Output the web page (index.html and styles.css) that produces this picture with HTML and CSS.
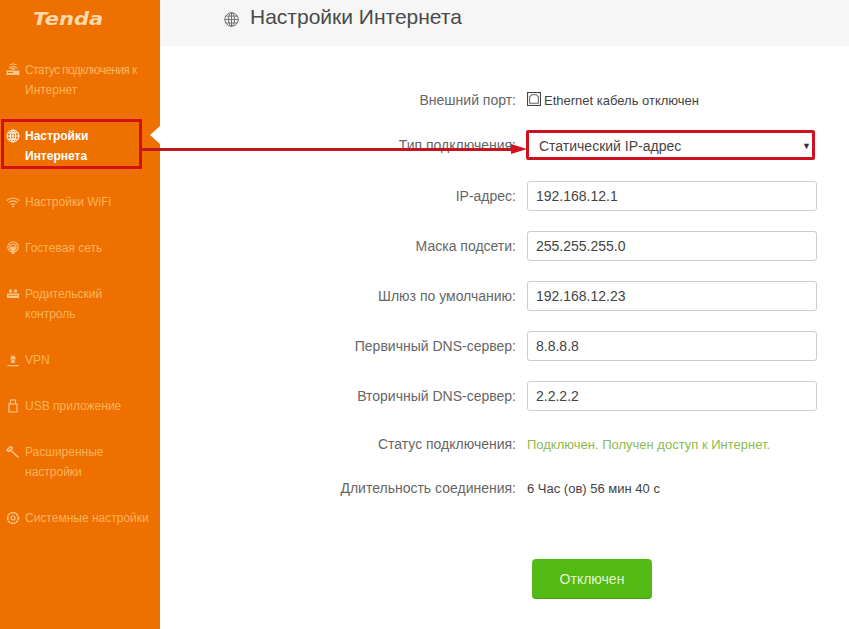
FILE: index.html
```html
<!DOCTYPE html>
<html lang="ru">
<head>
<meta charset="utf-8">
<title>Настройки Интернета</title>
<link rel="stylesheet" href="styles.css">
</head>
<body>
<div class="page">
  <aside class="sidebar">
    <div class="logo"><span class="logo-text">Tenda</span></div>
    <nav class="menu">
      <a class="item">
        <svg class="ico" viewBox="0 0 14 14"><path d="M3.200 5.200a5.200 5.200 0 0 1 7.600 0M5 6.400a2.800 2.800 0 0 1 4 0" fill="none" stroke="currentColor" stroke-width="1.300"/><path d="M3.500 1.800a7.500 7.500 0 0 1 7 0" fill="none" stroke="currentColor" stroke-width="1"/><path d="M.5 7.500h13v4.500H.5z" fill="currentColor"/><path d="M2 9.500h5" stroke="#ee7000" stroke-width="1"/></svg>
        <span><span class="squeeze">Статус подключения к</span><br>Интернет</span>
      </a>
      <a class="item active">
        <svg class="ico" viewBox="0 0 14 14"><g fill="none" stroke="currentColor" stroke-width="1"><circle cx="7" cy="7" r="6"/><ellipse cx="7" cy="7" rx="2.600" ry="6"/><path d="M7 1v12M1 7h12M2 4h10M2 10h10"/></g></svg>
        <span>Настройки<br>Интернета</span>
      </a>
      <a class="item">
        <svg class="ico" viewBox="0 0 14 14"><g fill="none" stroke="currentColor" stroke-width="1.100"><path d="M.8 5.500a8.800 8.800 0 0 1 12.400 0M2.800 7.700a5.800 5.800 0 0 1 8.400 0M4.900 9.800a3 3 0 0 1 4.200 0"/></g><circle cx="7" cy="11.600" r="1" fill="currentColor"/></svg>
        <span>Настройки WiFi</span>
      </a>
      <a class="item">
        <svg class="ico" viewBox="0 0 14 14"><g fill="none" stroke="currentColor" stroke-width="1.100"><circle cx="7" cy="6" r="5.200"/><circle cx="7" cy="6" r="3"/></g><path d="M5.200 5.500h3.600l-.6 7.500H5.800z" fill="currentColor"/></svg>
        <span>Гостевая сеть</span>
      </a>
      <a class="item">
        <svg class="ico" viewBox="0 0 14 14"><path d="M1 6.500h12v4.500H1z" fill="currentColor"/><circle cx="4.500" cy="4" r="1.700" fill="currentColor"/><circle cx="9.500" cy="4" r="1.700" fill="currentColor"/><path d="M2.500 8.500h9" stroke="#ee7000" stroke-width=".7"/></svg>
        <span>Родительский<br>контроль</span>
      </a>
      <a class="item">
        <svg class="ico" viewBox="0 0 14 14"><path d="M4.500 5a2.500 2.500 0 0 1 5 0v1.500h-5z" fill="currentColor"/><path d="M5.500 7h3l.5 3H5zM1.500 12h11v1.200h-11z" fill="currentColor"/></svg>
        <span>VPN</span>
      </a>
      <a class="item">
        <svg class="ico" viewBox="0 0 14 14"><g fill="none" stroke="currentColor" stroke-width="1.200"><path d="M4.500 1h5v4h-5zM3 5h8v8H3z"/></g></svg>
        <span>USB приложение</span>
      </a>
      <a class="item">
        <svg class="ico" viewBox="0 0 14 14"><g fill="none" stroke="currentColor" stroke-width="1.400"><path d="M5 5.500l7.500 7"/><path d="M1 5L4.500 1.500l2 1.500L3 6.500z"/></g></svg>
        <span>Расширенные<br>настройки</span>
      </a>
      <a class="item">
        <svg class="ico" viewBox="0 0 14 14"><g fill="none" stroke="currentColor"><circle cx="7" cy="7" r="5.400" stroke-width="1.600" stroke-dasharray="2.200 .6"/><circle cx="7" cy="7" r="2" stroke-width="1.200"/></g></svg>
        <span>Системные настройки</span>
      </a>
    </nav>
  </aside>
  <main class="content">
    <header class="topbar">
      <svg class="title-ico" viewBox="0 0 14 14"><g fill="none" stroke="#6b6b6b" stroke-width=".9"><circle cx="7" cy="7" r="6.300"/><ellipse cx="7" cy="7" rx="2.800" ry="6.300"/><path d="M7 .7v12.600M.7 7h12.600M1.600 3.800h10.800M1.600 10.200h10.800"/></g></svg>
      <h1 class="title">Настройки Интернета</h1>
    </header>
    <form class="form">
      <div class="row row-port">
        <label class="lbl">Внешний порт:</label>
        <div class="val val-dark"><svg class="port" viewBox="0 0 13 13"><rect x=".5" y=".5" width="12" height="12" fill="none" stroke="#444"/><path d="M2.500 10.500V4.500L4.500 2.500H8.500L10.500 4.500V10.500Z" fill="none" stroke="#666"/></svg>Ethernet кабель отключен</div>
      </div>
      <div class="row row-select">
        <label class="lbl">Тип подключения:</label>
        <div class="select"><span>Статический IP-адрес</span><span class="caret">▼</span></div>
      </div>
      <div class="row"><label class="lbl">IP-адрес:</label><div class="input">192.168.12.1</div></div>
      <div class="row"><label class="lbl">Маска подсети:</label><div class="input">255.255.255.0</div></div>
      <div class="row"><label class="lbl">Шлюз по умолчанию:</label><div class="input">192.168.12.23</div></div>
      <div class="row"><label class="lbl">Первичный DNS-сервер:</label><div class="input">8.8.8.8</div></div>
      <div class="row"><label class="lbl">Вторичный DNS-сервер:</label><div class="input">2.2.2.2</div></div>
      <div class="row row-status"><label class="lbl">Статус подключения:</label><div class="val val-green">Подключен. Получен доступ к Интернет.</div></div>
      <div class="row row-time"><label class="lbl">Длительность соединения:</label><div class="val val-dark">6 Час (ов) 56 мин 40 с</div></div>
      <div class="actions"><button type="button" class="btn">Отключен</button></div>
    </form>
  </main>
</div>
<div class="notch"></div>
<div class="mark mark-menu"></div>
<div class="arrow-line"></div>
<div class="arrow-head"></div>
</body>
</html>
```
FILE: styles.css
```css
* { box-sizing: border-box; }
html, body { margin: 0; height: 100%; overflow: hidden; background: #fff; }
body { position: relative; font-family: "Liberation Sans", Arial, sans-serif; }
.page { display: flex; width: 849px; height: 629px; }
.sidebar { width: 160px; flex: none; background: #ee7000; color: #fbb35a; }
.logo { height: 60px; padding: 6px 0 0 33px; }
.logo-text { display: inline-block; font: oblique bold 18px/26px "DejaVu Sans", sans-serif; color: #fcd9aa; transform: scaleX(1.17); transform-origin: left center; }
.menu { display: flex; flex-direction: column; gap: 26px; }
.item { display: flex; gap: 5px; padding-left: 6px; font-size: 12px; line-height: 20px; white-space: nowrap; }
.squeeze { letter-spacing: -.6px; }
.item.active { color: #fff; font-weight: bold; }
.ico { width: 14px; height: 14px; margin-top: 3px; flex: none; color: #fcc78a; }
.item.active .ico { color: #fff; }
.content { flex: 1; min-width: 0; }
.topbar { height: 46px; background: #f6f6f6; display: flex; align-items: flex-start; gap: 11px; padding: 5px 0 0 64px; }
.title-ico { width: 15px; height: 15px; margin-top: 7px; }
.title { margin: 0; font-size: 21px; line-height: 23px; font-weight: normal; color: #4a4a4a; }
.form { display: flex; flex-direction: column; gap: 20px; padding-top: 45px; }
.row { display: flex; align-items: center; height: 30px; }
.row-port { height: 18px; }
.row-select { height: 32px; }
.row-status { height: 26px; }
.row-time { height: 22px; }
.lbl { width: 356px; text-align: right; font-size: 14px; color: #666; flex: none; }
.val { margin-left: 11px; font-size: 13px; padding-top: 1px; }
.val-dark { color: #444; display: flex; align-items: center; gap: 3px; }
.val-green { color: #8dbb4e; }
.port { width: 14px; height: 14px; margin-bottom: 3px; }
.input { margin-left: 11px; width: 290px; height: 30px; border: 1px solid #ccc; border-radius: 3px; padding-left: 8px; font-size: 14px; line-height: 28px; color: #444; }
.select { margin-left: 10px; width: 289px; height: 30px; border: 3px solid #cf1020; border-radius: 2px; padding: 0 1px 0 10px; font-size: 14px; line-height: 26px; color: #444; display: flex; justify-content: space-between; }
.caret { font-size: 9px; color: #333; }
.actions { margin-top: 40px; padding-left: 372px; }
.btn { display: block; width: 120px; height: 40px; border: 0; border-bottom: 1px solid #4b9a14; border-radius: 4px; background: #53b914; color: #e4f7cf; font: 14px "Liberation Sans", Arial, sans-serif; }
.notch { position: absolute; left: 150px; top: 126px; width: 0; height: 0; border-style: solid; border-width: 9px 10px 9px 0; border-color: transparent #fff transparent transparent; }
.mark-menu { position: absolute; left: 1px; top: 119px; width: 141px; height: 50px; border: 3px solid #d5101c; }
.arrow-line { position: absolute; left: 142px; top: 148px; width: 372px; height: 3px; background: #c4161f; }
.arrow-head { position: absolute; left: 511px; top: 144px; width: 0; height: 0; border-style: solid; border-width: 5.5px 0 5.5px 16px; border-color: transparent transparent transparent #d5101c; }
```
